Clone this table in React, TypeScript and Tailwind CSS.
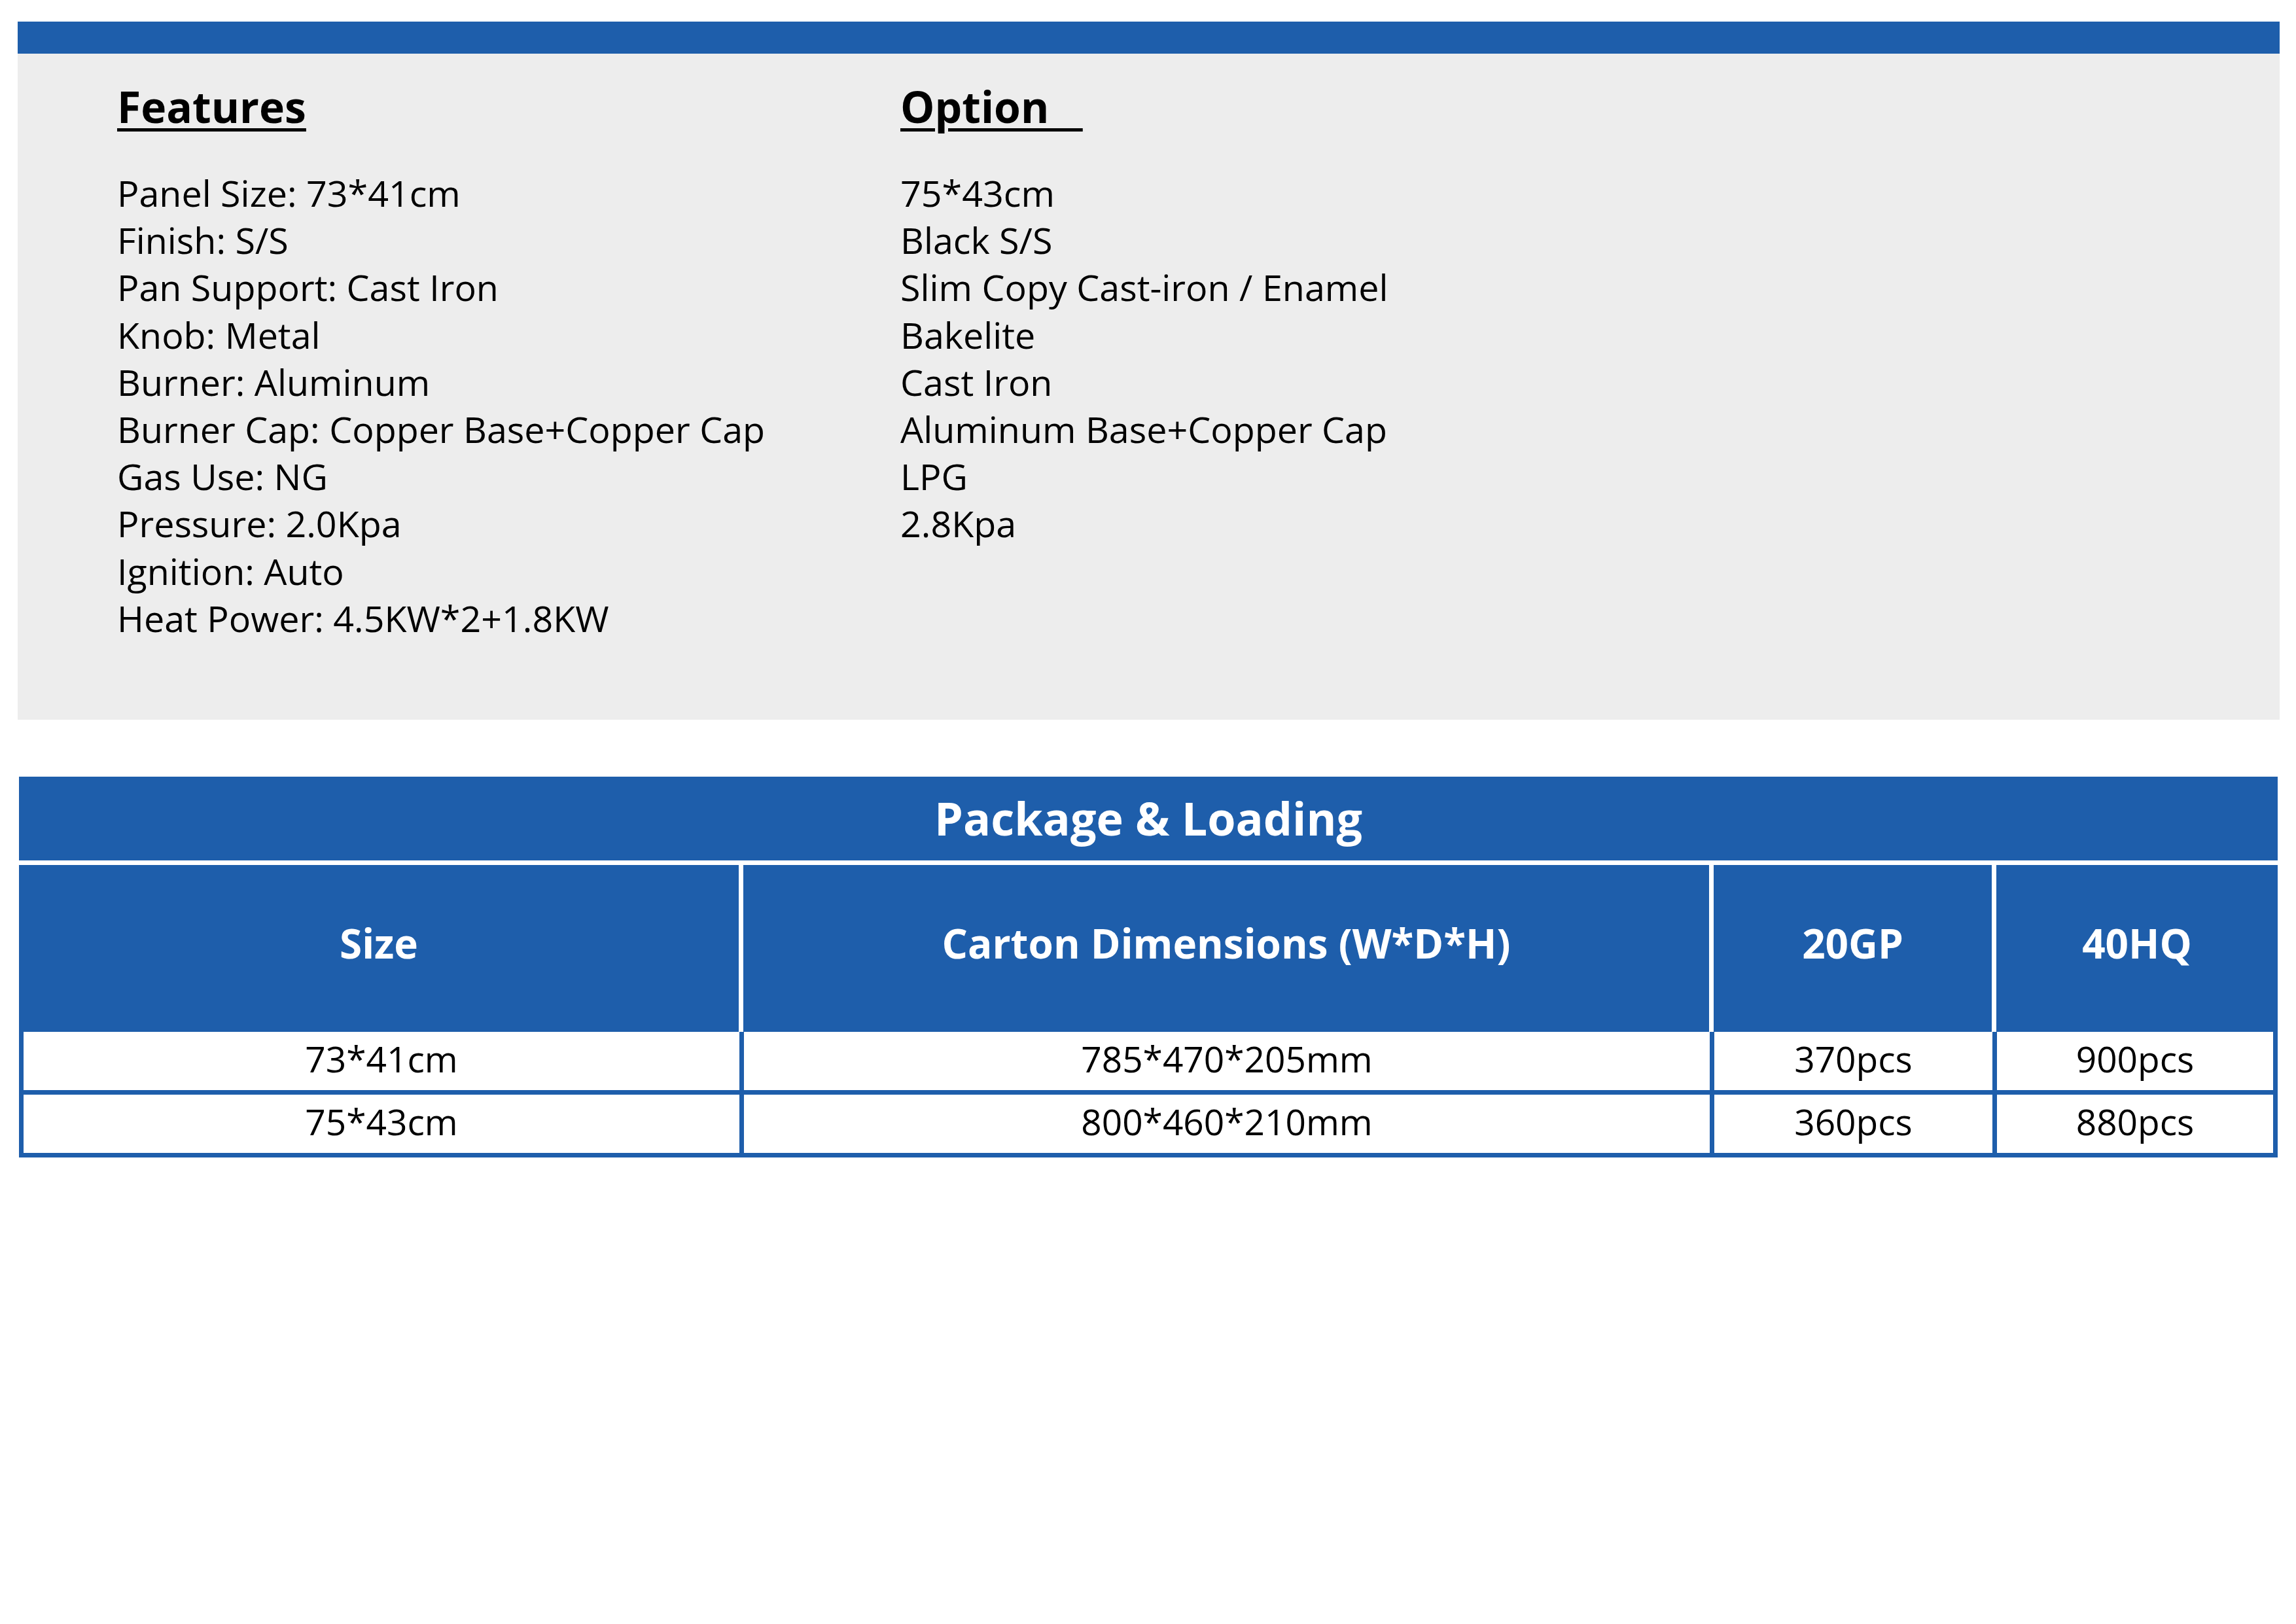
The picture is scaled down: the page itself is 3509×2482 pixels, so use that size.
import React from 'react'

const features = [
  'Panel Size: 73*41cm',
  'Finish: S/S',
  'Pan Support: Cast Iron',
  'Knob: Metal',
  'Burner: Aluminum',
  'Burner Cap: Copper Base+Copper Cap',
  'Gas Use: NG',
  'Pressure: 2.0Kpa',
  'Ignition: Auto',
  'Heat Power: 4.5KW*2+1.8KW',
]

const options = [
  '75*43cm',
  'Black S/S',
  'Slim Copy Cast-iron / Enamel',
  'Bakelite',
  'Cast Iron',
  'Aluminum Base+Copper Cap',
  'LPG',
  '2.8Kpa',
]

const rows = [
  ['73*41cm', '785*470*205mm', '370pcs', '900pcs'],
  ['75*43cm', '800*460*210mm', '360pcs', '880pcs'],
]

const headers = ['Size', 'Carton Dimensions (W*D*H)', '20GP', '40HQ']

export default function App() {
  return (
    <div className="w-[3509px] h-[2482px] bg-white text-black font-['Open_Sans','Noto_Sans',sans-serif] pt-[33px]">
      {/* top band + features */}
      <div className="ml-[27px] w-[3457px]">
        <div className="h-[49px] bg-[#1e5eab]" />
        <div className="bg-[#ededed] h-[1018px] pl-[152px] pt-[40px] grid grid-cols-[1197px_1fr]">
          <div>
            <h2 className="text-[66px] leading-[80px] font-bold underline decoration-[length:5px] underline-offset-[8px]">Features</h2>
            <ul className="mt-[57px] text-[55.6px] leading-[72.2px]">
              {features.map((f) => (
                <li key={f}>{f}</li>
              ))}
            </ul>
          </div>
          <div>
            <h2 className="text-[66px] leading-[80px] font-bold underline decoration-[length:5px] underline-offset-[8px]">Option&nbsp;&nbsp;&nbsp;</h2>
            <ul className="mt-[57px] text-[55.6px] leading-[72.2px]">
              {options.map((o) => (
                <li key={o}>{o}</li>
              ))}
            </ul>
          </div>
        </div>
      </div>

      {/* package table */}
      <div className="ml-[29px] w-[3452px] mt-[87px]">
        <div className="h-[128px] bg-[#1e5eab] flex items-center justify-center text-white text-[70px] font-bold pb-[2px]">
          Package &amp; Loading
        </div>
        <div className="mt-[7px] h-[255px] grid grid-cols-[1100px_1476px_425px_1fr] gap-[7px] bg-white">
          {headers.map((h) => (
            <div key={h} className="bg-[#1e5eab] flex items-center justify-center text-white text-[62px] font-bold pb-[16px]">
              {h}
            </div>
          ))}
        </div>
        <div className="bg-[#1e5eab] px-[7px] pb-[7px] flex flex-col gap-[7px]">
          {rows.map((r) => (
            <div key={r[0]} className="h-[89px] grid grid-cols-[1094px_1476px_425px_1fr] gap-[7px]">
              {r.map((c, i) => (
                <div key={i} className="bg-white flex items-center justify-center text-[55px] pb-[6px]">
                  {c}
                </div>
              ))}
            </div>
          ))}
        </div>
      </div>
    </div>
  )
}
